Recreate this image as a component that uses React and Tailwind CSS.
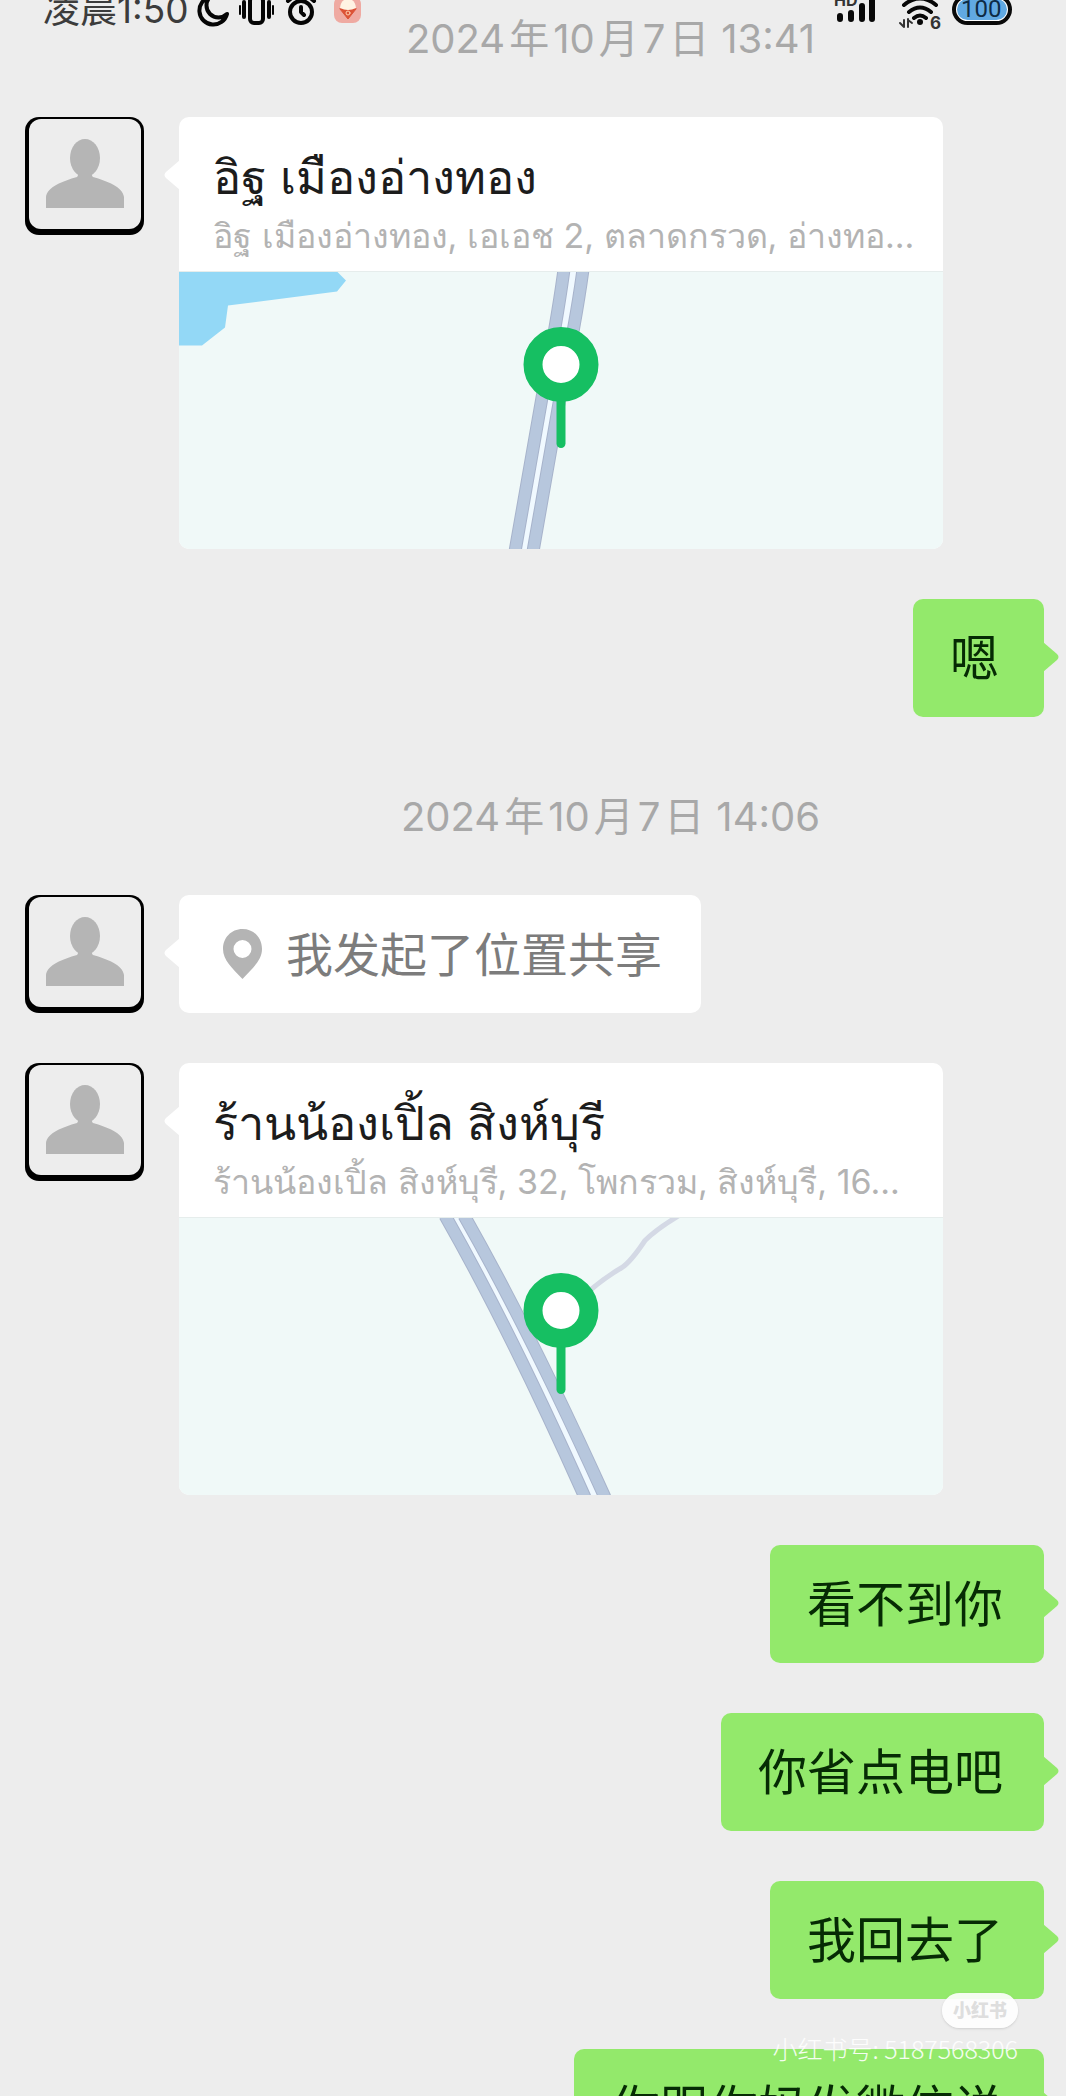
import React from 'react';

const AVATAR_SHOULDERS = 'M21 91 V80 C22 70 38 64 52 60 C54 58 53 55 52 52 H68 C67 55 66 58 68 60 C82 64 98 70 99 80 V91 Z';

const maps = {
    angThong: {
        water: 'M0 0 H158 L167 9 L158 20 L49 34 L46 56 L23 74 H0 Z',
        lanes: ['M385 -2 Q378 50 363 126 L336 280', 'M404 -2 Q397 50 381 126 L354 280'],
        median: 'M394 -2 Q387 50 372 126 L345 280',
    },
    singBuri: {
        lane: 'M500 -2 Q477 12 466 23 Q452 44 443 50 Q426 60 412 72',
        lanes: ['M266 -2 Q332 114 406 280', 'M285 -2 Q351 114 426 280'],
        median: 'M276 -2 Q342 114 416 280',
    },
};

const messages = [
    { id: 1, type: 'time', text: ['2024', '年', '10', '月', '7', '日', '13:41'] },
    {
        id: 2,
        type: 'location',
        title: 'อิฐ เมืองอ่างทอง',
        address: 'อิฐ เมืองอ่างทอง, เอเอช 2, ตลาดกรวด, อ่างทอ...',
        map: maps.angThong,
    },
    { id: 3, type: 'mine', text: '嗯' },
    { id: 4, type: 'time', text: ['2024', '年', '10', '月', '7', '日', '14:06'] },
    { id: 5, type: 'share', text: '我发起了位置共享' },
    {
        id: 6,
        type: 'location',
        title: 'ร้านน้องเปิ้ล สิงห์บุรี',
        address: 'ร้านน้องเปิ้ล สิงห์บุรี, 32, โพกรวม, สิงห์บุรี, 16...',
        map: maps.singBuri,
    },
    { id: 7, type: 'mine', text: '看不到你' },
    { id: 8, type: 'mine', text: '你省点电吧' },
    { id: 9, type: 'mine', text: '我回去了' },
    { id: 10, type: 'mine', text: '你跟你妈发微信说' },
];

function StatusBar() {
    return (
        <header className="absolute inset-x-0 -top-4 z-10 flex h-[50px] items-center justify-between pl-[43px] pr-[54px]">
            <div className="flex items-center">
                <span className="text-[37px] leading-none text-[#3c3c3c]">凌晨1:50</span>
                <svg className="ml-2 h-9 w-[166px]" viewBox="0 0 166 36" fill="none" stroke="#050505" strokeWidth="4" strokeLinecap="round" strokeLinejoin="round">
                    {/* Luna */}
                    <path d="M13 6 A14 14 0 1 0 30 23 A10 10 0 0 1 13 6 Z" />
                    {/* Vibración */}
                    <rect x="53" y="6" width="13" height="26" rx="4" />
                    <path d="M47 11 V26 M72 11 V26" />
                    <path d="M43 15 V23 M76 15 V23" strokeWidth="2" />
                    {/* Alarma */}
                    <circle cx="104" cy="21" r="11" />
                    <path d="M104 16 V21 L107 24 M91 10 L97 5 M117 10 L111 5" />
                    <rect x="137" y="5" width="27" height="27" rx="8" fill="#efaaa2" stroke="none" />
                    <path d="M143 18 L151 28 L159 18 Z" fill="#dc5236" stroke="#dc5236" strokeWidth="1" />
                    <path d="M143 17 Q144 8 151 8 Q158 8 159 17 Q151 21 143 17 Z" fill="#fff3e3" stroke="none" />
                    <circle cx="151" cy="22" r="2" stroke="#ffd0b0" strokeWidth="1" />
                </svg>
            </div>

            <div className="flex items-center">
                <svg className="h-12 w-[110px]" viewBox="0 0 110 48" fill="none" stroke="#080808" strokeLinecap="round">
                    <text x="0" y="21" fontSize="16" fontWeight="700" fill="#333" stroke="none">HD</text>
                    <path d="M6 31 V34 M17 28 V34 M28 21 V34 M38 12 V34" strokeWidth="6" />
                    <path d="M70 20 Q86 7 102 20 M75 27 Q86 18 97 27 M80 33 Q86 28 92 33" strokeWidth="4" />
                    <circle cx="86" cy="37" r="3" fill="#080808" stroke="none" />
                    <path d="M70 42 V35 M70 42 L66 38 M74 34 V42 M74 35 L78 38" stroke="#333" strokeWidth="2" />
                    <text x="96" y="44" fontSize="17" fontWeight="700" fill="#333" stroke="none">6</text>
                </svg>
                <div className="ml-2 flex h-[31px] w-[60px] items-center justify-center rounded-full border-4 border-[#0a0a0a] bg-white p-px">
                    <span className="flex h-full w-full items-center rounded-full bg-[#61a9e2] pl-1 font-['Roboto',sans-serif] text-[24px] font-normal leading-none text-[#0d2b45]">100</span>
                </div>
            </div>
        </header>
    );
}

function Avatar() {
    return (
        <div className="mr-[35px] h-[118px] w-[119px] shrink-0 rounded-[14px] bg-black pb-[6px] pl-[4px] pr-[3px] pt-[2px]">
            <svg className="h-full w-full rounded-[12px] bg-[#ededed]" viewBox="4 2 112 110" fill="#b5b5b5">
                <ellipse cx="60" cy="41" rx="15" ry="19" />
                <path d={AVATAR_SHOULDERS} />
            </svg>
        </div>
    );
}

function Tail({ mine }) {
    return mine ? (
        <svg className="absolute -right-[15px] top-[43px] h-[30px] w-4" viewBox="0 0 16 30" fill="#93e96b">
            <path d="M0 0 L14 12 Q17 15 14 18 L0 30 Z" />
        </svg>
    ) : (
        <svg className="absolute -left-[15px] top-[43px] h-[30px] w-4" viewBox="0 0 16 30" fill="#fff">
            <path d="M16 0 L2 12 Q-1 15 2 18 L16 30 Z" />
        </svg>
    );
}

function MapPreview({ map }) {
    return (
        <svg className="block h-[278px] w-full border-t border-[#e6edec] bg-[#f0f9f8]" viewBox="0 0 764 278" preserveAspectRatio="xMidYMid slice" fill="none">
            {map.water && <path d={map.water} fill="#93d8f6" />}
            {map.lane && <path d={map.lane} stroke="#d4d9e5" strokeWidth="5" />}
            <path d={map.median} stroke="#f0f9ff" strokeWidth="8" />
            {map.lanes.map(d => (
                <g key={d}>
                    <path d={d} stroke="#a7b3cb" strokeWidth="13" />
                    <path d={d} stroke="#b7c7dd" strokeWidth="11" />
                </g>
            ))}
            <path d="M382 125 V172" stroke="#16bf62" strokeWidth="9" strokeLinecap="round" />
            <circle cx="382" cy="93" r="28" fill="#fff" stroke="#16bf62" strokeWidth="19" />
        </svg>
    );
}

function LocationMessage({ title, address, map }) {
    return (
        <div className="flex items-start">
            <Avatar />
            <article className="relative w-full max-w-[764px] rounded-[10px] bg-white">
                <Tail />
                <div className="flex h-[154px] flex-col justify-end gap-1 px-[34px] pb-[10px]">
                    <h2 className="whitespace-nowrap text-[47px] font-medium leading-[60px] text-[#1c1c1c]">{title}</h2>
                    <p className="whitespace-nowrap text-[34px] leading-[50px] text-[#b3b3b3]">{address}</p>
                </div>
                <div className="overflow-hidden rounded-b-[10px]">
                    <MapPreview map={map} />
                </div>
            </article>
        </div>
    );
}

function ShareMessage({ text }) {
    return (
        <div className="flex items-start">
            <Avatar />
            <div className="relative flex h-[118px] items-center rounded-[10px] bg-white pl-[44px] pr-[39px] text-[#7c7c7c]">
                <Tail />
                <svg className="mr-6 h-[50px] w-[39px]" viewBox="0 0 39 50" fill="#b4b4b4">
                    <path fillRule="evenodd" d="M19.500 0 C8 0 0 9 0 20 C0 31 9 39 19.500 50 C30 39 39 31 39 20 C39 9 31 0 19.500 0 Z M19.500 11 A9 9 0 1 1 19.500 29 A9 9 0 1 1 19.500 11 Z" />
                </svg>
                <p className="whitespace-nowrap text-[47px] leading-none">{text}</p>
            </div>
        </div>
    );
}

function MyMessage({ text }) {
    return (
        <div className="flex justify-end">
            <div className="relative flex h-[118px] min-w-[131px] items-center rounded-[10px] bg-[#93e96b] pl-[37px] pr-[41px]">
                <Tail mine />
                <p className="whitespace-nowrap text-[49px] leading-none text-[#062b04]">{text}</p>
            </div>
        </div>
    );
}

function TimeLabel({ text }) {
    const [year, y, month, m, day, d, clock] = text;
    return (
        <time className="flex h-[78px] items-end justify-center gap-1 whitespace-nowrap pb-[6px] pl-[152px] text-[40px] leading-[44px] text-[#a8a8a8]">
            <span>{year}</span>
            <span>{y}</span>
            <span>{month}</span>
            <span>{m}</span>
            <span>{day}</span>
            <span>{d}</span>
            <span className="ml-2">{clock}</span>
        </time>
    );
}

function Message({ message }) {
    if (message.type === 'time') return <TimeLabel text={message.text} />;
    if (message.type === 'location') return <LocationMessage {...message} />;
    if (message.type === 'share') return <ShareMessage text={message.text} />;
    return <MyMessage text={message.text} />;
}

export default function App() {
    return (
        <div className="relative h-screen overflow-hidden bg-[#ededed] font-['Inter','Noto_Sans_CJK_SC',sans-serif]">
            <StatusBar />

            <main className="-mt-[11px] flex flex-col gap-[50px] pl-[25px] pr-[22px]">
                {messages.map(message => (
                    <Message key={message.id} message={message} />
                ))}
            </main>

            {/* Marca de agua */}
            <footer className="absolute bottom-8 right-12 flex flex-col items-end gap-1">
                <span className="flex h-[35px] w-[76px] items-center justify-center rounded-full bg-white/90 text-[18px] font-black text-[#dedede] shadow-sm">小红书</span>
                <span className="font-['Noto_Sans_CJK_SC',sans-serif] text-[25px] font-light leading-8 text-white/90">小红书号: 5187568306</span>
            </footer>
        </div>
    );
}
